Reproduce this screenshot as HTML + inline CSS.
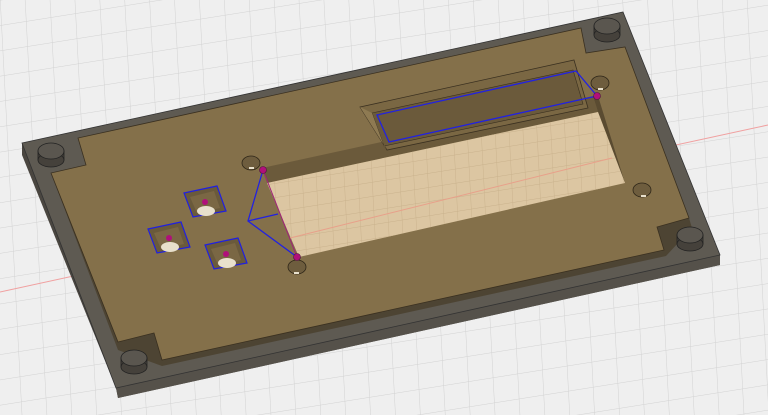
<!DOCTYPE html>
<html><head><meta charset="utf-8"><style>
html,body{margin:0;padding:0;background:#efefef;}
svg{display:block;}
</style></head><body>
<svg width="768" height="415" viewBox="0 0 768 415" xmlns="http://www.w3.org/2000/svg">
<defs>
<pattern id="g" width="25" height="25" patternUnits="userSpaceOnUse" patternTransform="rotate(-9) skewX(-6)">
<rect width="25" height="25" fill="#efefef"/>
<path d="M0 0H25M0 0V25" stroke="#d2d2d2" stroke-width="1" fill="none"/>
</pattern>
<pattern id="g2" width="14" height="14" patternUnits="userSpaceOnUse" patternTransform="rotate(-9) skewX(-6)">
<path d="M0 0H14M0 0V14" stroke="#c9b18c" stroke-width="0.9" fill="none"/>
</pattern>
</defs>
<rect width="768" height="415" fill="url(#g)"/>
<line x1="0" y1="292" x2="768" y2="125" stroke="#f0a0a0" stroke-width="1"/>
<polygon points="22,143 623,12 720,255 720,265 118,398 116,388 22,155" fill="#4a4640"/>
<polygon points="116,388 720,255 720,265 118,398" fill="#55514a"/>
<polygon points="22,143 623,12 720,255 116,388" fill="#5e5a52" stroke="#333" stroke-width="0.8"/>
<polygon points="51,173 118,342 154,333 162,360 664,250 657,227 689,218 692,228 666,256 162,366 118,350" fill="#4d4433"/>
<polygon points="78,138 86,165 51,173 118,342 154,333 162,360 664,250 657,227 689,218 625,47 586,53 581,28" fill="#84704a" stroke="#3a3020" stroke-width="0.8"/>
<polygon points="262,168 593,96 598,112 267,183" fill="#6b5a3b"/>
<polygon points="593,96 598,96 625,183 598,112" fill="#5a4b31"/>
<polygon points="262,168 267,183 299,257" fill="#7b6844"/>
<polygon points="267,183 598,112 625,183 299,257" fill="#dcc6a2"/>
<polygon points="267,183 598,112 625,183 299,257" fill="url(#g2)"/>
<line x1="290" y1="238" x2="612" y2="158" stroke="#e8a08a" stroke-width="1"/>
<polygon points="360,107 574,60 588,108 387,150" fill="#7a6743" stroke="#3a3020" stroke-width="0.8"/>
<polygon points="372,113 573,70 583,104 384,146" fill="#6b5a3b" stroke="#3a3020" stroke-width="0.6"/>
<polygon points="360,107 372,113 384,146 387,150" fill="#8e7a52"/>
<g fill="#6e5d3e" stroke="#2e2618" stroke-width="0.8">
<ellipse cx="251" cy="163" rx="9" ry="7"/>
<ellipse cx="297" cy="267" rx="9" ry="7"/>
<ellipse cx="600" cy="83" rx="9" ry="7"/>
<ellipse cx="642" cy="190" rx="9" ry="7"/>
</g>
<g fill="#e8e0cc"><rect x="249" y="167" width="5" height="2"/><rect x="294" y="272" width="5" height="2"/><rect x="598" y="88" width="5" height="2"/><rect x="641" y="195" width="5" height="2"/></g>
<g stroke="#222" stroke-width="0.8">
<g transform="translate(51,151)"><rect x="-13" y="0" width="26" height="9" fill="#45413b"/><ellipse cx="0" cy="9" rx="13" ry="7" fill="#45413b"/><ellipse cx="0" cy="0" rx="13" ry="8" fill="#5a564f"/></g>
<g transform="translate(607,26)"><rect x="-13" y="0" width="26" height="9" fill="#45413b"/><ellipse cx="0" cy="9" rx="13" ry="7" fill="#45413b"/><ellipse cx="0" cy="0" rx="13" ry="8" fill="#5a564f"/></g>
<g transform="translate(690,235)"><rect x="-13" y="0" width="26" height="9" fill="#45413b"/><ellipse cx="0" cy="9" rx="13" ry="7" fill="#45413b"/><ellipse cx="0" cy="0" rx="13" ry="8" fill="#5a564f"/></g>
<g transform="translate(134,358)"><rect x="-13" y="0" width="26" height="9" fill="#45413b"/><ellipse cx="0" cy="9" rx="13" ry="7" fill="#45413b"/><ellipse cx="0" cy="0" rx="13" ry="8" fill="#5a564f"/></g>
</g>
<g>
<g transform="translate(205,202)"><polygon points="-21,-9 12,-16 21,9 -12,15" fill="#6a5a3b" stroke="#2020e0" stroke-width="1.2"/><polygon points="-15,-5 9,-11 15,6 -8,11" fill="#7a6744"/><ellipse cx="1" cy="9" rx="9" ry="5" fill="#e8e0cc"/><circle cx="0" cy="0" r="3" fill="#b0107a"/></g>
<g transform="translate(169,238)"><polygon points="-21,-9 12,-16 21,9 -12,15" fill="#6a5a3b" stroke="#2020e0" stroke-width="1.2"/><polygon points="-15,-5 9,-11 15,6 -8,11" fill="#7a6744"/><ellipse cx="1" cy="9" rx="9" ry="5" fill="#e8e0cc"/><circle cx="0" cy="0" r="3" fill="#b0107a"/></g>
<g transform="translate(226,254)"><polygon points="-21,-9 12,-16 21,9 -12,15" fill="#6a5a3b" stroke="#2020e0" stroke-width="1.2"/><polygon points="-15,-5 9,-11 15,6 -8,11" fill="#7a6744"/><ellipse cx="1" cy="9" rx="9" ry="5" fill="#e8e0cc"/><circle cx="0" cy="0" r="3" fill="#b0107a"/></g>
</g>
<g fill="none" stroke="#2222e0" stroke-width="1.3">
<polygon points="377,115 576,71 597,96 389,142"/>
<polyline points="263,170 248,221 297,257"/>
<line x1="248" y1="221" x2="278" y2="214"/>
</g>
<line x1="263" y1="170" x2="297" y2="257" stroke="#a0207a" stroke-width="1"/>
<g fill="#b0107a" stroke="#501040" stroke-width="0.6">
<circle cx="263" cy="170" r="3.5"/><circle cx="297" cy="257" r="3.5"/><circle cx="597" cy="96" r="3.5"/>
</g>
</svg>
</body></html>
